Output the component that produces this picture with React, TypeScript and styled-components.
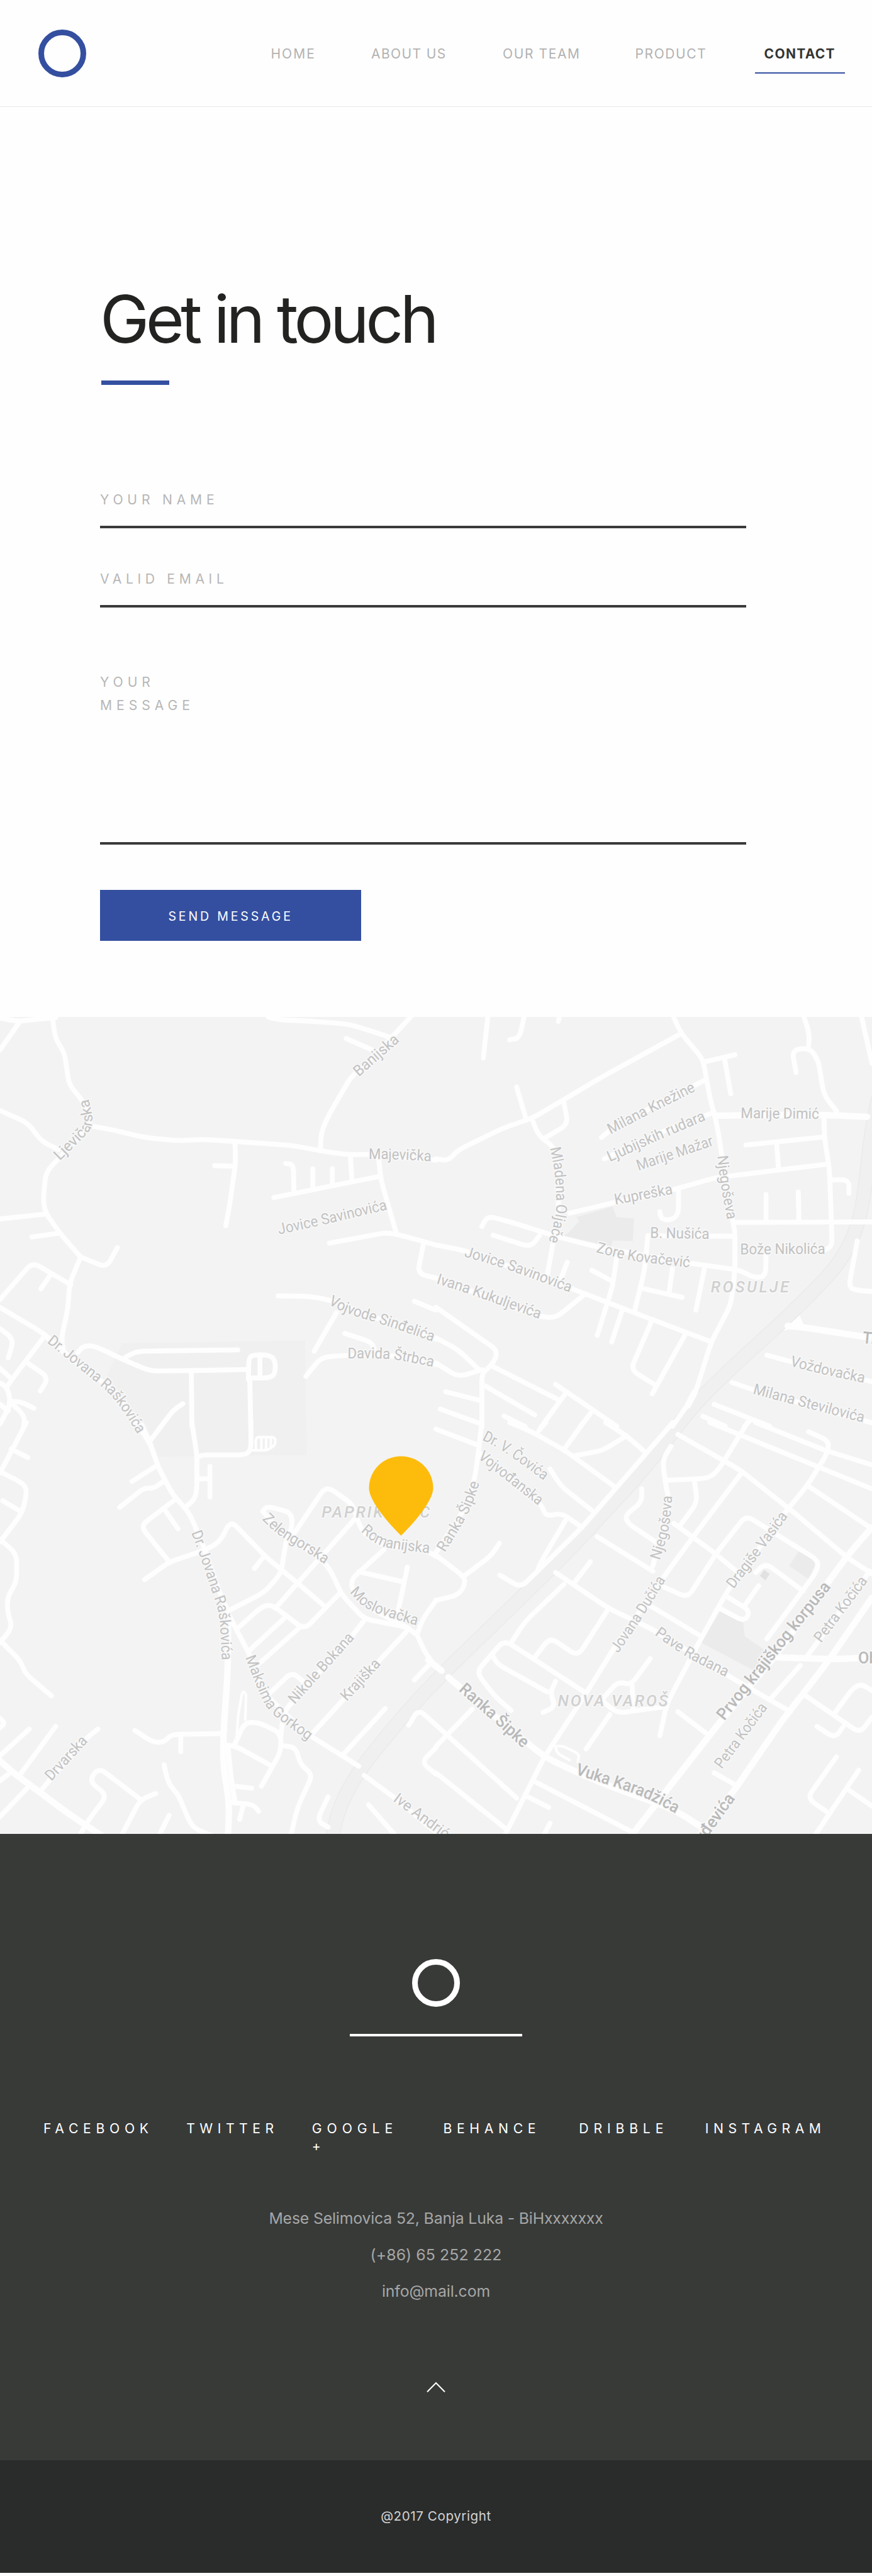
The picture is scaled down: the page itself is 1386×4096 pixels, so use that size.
import React from "react";
import styled, { createGlobalStyle } from "styled-components";

const colors = {
  blue: "#344fa0",
  ink: "#232321",
  rule: "#393a39",
  muted: "#b2b2b2",
  paper: "#fefefe",
  footer: "#383a38",
  footerDark: "#2a2c2b",
  pin: "#fdbc0b",
};

const GlobalStyle = createGlobalStyle`
  *, *::before, *::after { box-sizing: border-box; }
  body {
    margin: 0;
    background: ${colors.paper};
    font-family: Inter, "Liberation Sans", sans-serif;
    -webkit-font-smoothing: antialiased;
  }
`;

/* ---------- shared ---------- */

const Page = styled.div`
  width: 1386px;
  height: 4096px;
  overflow: hidden;
  display: flex;
  flex-direction: column;
  background: ${colors.paper};
`;

const Ring = styled.div<{ $color: string }>`
  width: 76px;
  height: 76px;
  border: 9px solid ${(p) => p.$color};
  border-radius: 50%;
`;

const Tracked = styled.span<{ $tracking: number }>`
  letter-spacing: ${(p) => p.$tracking}px;
  white-space: nowrap;
`;

/* ---------- header ---------- */

const Header = styled.header`
  height: 170px;
  flex: none;
  display: flex;
  align-items: flex-start;
  border-bottom: 1px solid #e9e9e9;
`;

const LogoLink = styled.a`
  display: block;
  margin: 47px 293.5px 0 61px;
`;

const Nav = styled.nav`
  display: grid;
  grid-template-columns: 159.5px 209px 210.5px 190.8px 142.4px;
  padding-top: 68px;
`;

const NavLink = styled.a<{ $active?: boolean }>`
  height: 49px;
  font-size: 21px;
  line-height: 36px;
  color: ${(p) => (p.$active ? "#333533" : colors.muted)};
  font-weight: ${(p) => (p.$active ? 700 : 400)};
  padding-left: ${(p) => (p.$active ? "14.3px" : "0")};
  border-bottom: 2px solid ${(p) => (p.$active ? colors.blue : "transparent")};
`;

const navItems = [
  { label: "HOME", tracking: 2 },
  { label: "ABOUT US", tracking: 1.4 },
  { label: "OUR TEAM", tracking: 1.6 },
  { label: "PRODUCT", tracking: 1.6 },
  { label: "CONTACT", tracking: 1.3, active: true },
];

/* ---------- contact form ---------- */

const Contact = styled.main`
  height: 1447px;
  flex: none;
  padding: 277px 0 0 159px;
`;

const Title = styled.h1`
  margin: 0;
  font-size: 105px;
  line-height: 120px;
  font-weight: 400;
  letter-spacing: -5.65px;
  color: ${colors.ink};
`;

const TitleBar = styled.div`
  width: 108px;
  height: 7px;
  margin: 38px 0 162px 2px;
  background: ${colors.blue};
`;

const Field = styled.label<{ $height: number; $gap: number; $line: number }>`
  display: flex;
  flex-direction: column;
  justify-content: space-between;
  width: 1027px;
  height: ${(p) => p.$height}px;
  margin-bottom: ${(p) => p.$gap}px;
  font-size: 21.2px;
  line-height: ${(p) => p.$line}px;
  color: #b7b7b7;

  &::after {
    content: "";
    height: 3.6px;
    background: ${colors.rule};
  }
`;

const Lines = styled.span`
  display: flex;
  flex-direction: column;
`;

const SubmitButton = styled.button`
  display: flex;
  align-items: center;
  width: 415px;
  height: 81px;
  padding: 2px 0 0 108.5px;
  border: 0;
  background: ${colors.blue};
  color: #fff;
  font: 400 19.6px Inter, sans-serif;
`;

/* ---------- map ---------- */

const MapFrame = styled.section`
  height: 1299.4px;
  flex: none;
  background: #f3f3f3;

  svg {
    display: block;
    width: 1386px;
    height: 1299.4px;
  }
`;

const Road = styled.path<{ $width: number }>`
  fill: none;
  stroke: #fefefe;
  stroke-width: ${(p) => p.$width};
  stroke-linecap: round;
  stroke-linejoin: round;
`;

const Rail = styled.path<{ $width: number; $color: string }>`
  fill: none;
  stroke: ${(p) => p.$color};
  stroke-width: ${(p) => p.$width};
`;

const Street = styled.text<{ $kind: Kind }>`
  font-family: Roboto, sans-serif;
  font-size: ${(p) => ({ street: 40, avenue: 44, district: 42 })[p.$kind]}px;
  font-weight: ${(p) => (p.$kind === "street" ? 400 : 500)};
  font-style: ${(p) => (p.$kind === "district" ? "italic" : "normal")};
  fill: ${(p) => ({ street: "#c2c2c2", avenue: "#b9b9b9", district: "#d0d0d0" })[p.$kind]};
  stroke: #f8f8f8;
  stroke-width: 6px;
  stroke-linejoin: round;
  paint-order: stroke;
`;

type Kind = "street" | "avenue" | "district";
type Point = [number, number];
type Tile = { x: number; y: number };

const TILE_SX = 1152 / 1568;
const TILE_SY = 1100 / 1568;
const NW: Tile = { x: 0, y: 2670 };
const NE: Tile = { x: 1152, y: 2670 };
const SW: Tile = { x: 0, y: 3760 };
const SE: Tile = { x: 1152, y: 3760 };

const project = (tile: Tile, line: string): Point[] =>
  line.split(" ").map((pair) => {
    const [x, y] = pair.split(",").map(Number);
    return [tile.x + x * TILE_SX, tile.y + y * TILE_SY];
  });

const distance = (a: Point, b: Point) => Math.hypot(b[0] - a[0], b[1] - a[1]);
const toward = (a: Point, b: Point, d: number): Point => {
  const t = d / (distance(a, b) || 1);
  return [a[0] + (b[0] - a[0]) * t, a[1] + (b[1] - a[1]) * t];
};
const fmt = (p: Point) => `${p[0].toFixed(1)} ${p[1].toFixed(1)}`;

/* Polyline with its corners eased by a quadratic curve. */
const soften = (pts: Point[], radius: number) => {
  let d = `M${fmt(pts[0])}`;
  for (let i = 1; i < pts.length - 1; i++) {
    const before = Math.min(radius, distance(pts[i], pts[i - 1]) / 2);
    const after = Math.min(radius, distance(pts[i], pts[i + 1]) / 2);
    d += `L${fmt(toward(pts[i], pts[i - 1], before))}Q${fmt(pts[i])} ${fmt(toward(pts[i], pts[i + 1], after))}`;
  }
  return `${d}L${fmt(pts[pts.length - 1])}`;
};

const streets: [Tile, string[]][] = [
  [NW, [
    "0,30 60,42 100,38 200,28", "0,150 70,45",
    "187,20 200,110 232,160 248,280 300,345 325,435",
    "0,378 100,425 150,495 210,525",
    "330,437 400,450 520,480 640,492 730,487 850,495 1050,510 1155,530 1250,545 1330,543 1568,565",
    "325,435 210,560 165,610 155,720 165,765 215,840 290,930",
    "0,787 165,768", "115,855 215,840", "290,930 383,970 422,895",
    "290,930 250,1030 245,1120 220,1240 230,1290",
    "0,1090 117,950 255,1035", "183,995 147,1050", "0,1120 160,1220 230,1290",
    "0,1200 50,1240 30,1310", "155,1235 40,1395 25,1420", "100,1330 175,1385 145,1435",
    "0,1350 40,1388", "0,1405 25,1420 40,1480 0,1560", "40,1475 75,1475 122,1500",
    "45,1485 90,1530 85,1568", "30,1510 0,1485",
    "160,1225 300,1350 420,1440 490,1554 540,1634",
    "280,1290 300,1265 340,1265 440,1315 540,1360 700,1358 890,1354",
    "445,1312 490,1285 855,1280",
    "893,1390 895,1310 910,1299 970,1299 990,1320 990,1370 970,1386 895,1386", "935,1299 935,1385",
    "688,1360 690,1568", "898,1390 902,1568", "535,1629 625,1505 658,1483",
    "845,500 848,570 825,740 812,812", "772,586 840,588",
    "985,706 1366,626", "1028,578 1055,580 1057,690", "1125,598 1125,668", "1195,598 1195,655",
    "1260,545 1266,645", "1362,560 1370,640 1425,840",
    "1185,878 1390,838 1440,848 1568,885", "1522,885 1502,992 1568,1010",
    "1000,1077 1110,1078 1190,1093 1300,1140 1568,1240", "1210,1140 1130,1285",
    "1240,1218 1335,1250 1345,1275", "1100,1380 1155,1308 1250,1300 1400,1300 1568,1335",
    "1490,1097 1568,1130",
    "965,26 1000,36 1120,42 1250,52 1340,80 1410,105", "1245,107 1350,155",
    "1490,10 1420,90 1350,170 1260,255 1180,400 1155,460 1152,530",
  ]],
  [NE, [
    "187,20 170,180", "318,20 300,105 265,112", "445,20 440,42",
    "0,560 45,568 75,530 240,445 350,405 600,250 875,92",
    "850,15 880,85 960,185 985,330 1010,430 1030,560 1060,760 1075,830 1075,985 1060,1110 990,1250 930,1450 850,1568",
    "965,195 1075,168", "1037,180 1060,315", "595,480 640,440 970,262", "605,560 820,455 1000,385",
    "290,290 325,415", "345,410 370,475 425,515 440,600 440,780 420,880 400,1000",
    "460,350 475,430 395,480", "480,765 640,725 860,675 1000,632 1410,580",
    "872,680 872,770 845,792 810,788 805,760",
    "1115,508 1395,478", "1225,500 1232,600", "1395,400 1397,480 1415,600 1425,890 1395,905",
    "1320,15 1343,90 1340,135", "1295,235 1280,150 1345,142 1375,190 1395,320 1440,380", "1528,15 1568,200",
    "1425,640 1485,638 1485,690", "1075,800 1568,798", "1187,695 1187,795", "1303,685 1305,795",
    "762,850 1075,852", "762,850 750,980 715,1130",
    "165,815 185,775 290,805 440,855 590,895 920,955 1095,980 1140,1008 1185,1005 1187,920",
    "205,848 340,893 372,850", "0,885 100,905 490,1050 700,1135 990,1250",
    "0,1010 375,1155 430,1160 530,1075", "472,950 450,1010", "560,980 635,1022",
    "650,930 635,1040 580,1225", "670,1130 632,1250", "740,1048 885,1082", "850,975 838,1065",
    "965,975 935,1130", "778,1165 700,1355 785,1410", "900,1215 778,1445",
    "1515,870 1485,1040 1505,1055 1568,1060",
    "1190,1300 1280,1325 1568,1400", "1065,1403 1140,1430 1568,1555", "1000,1485 1200,1568",
    "960,1530 1040,1568", "1130,1545 1110,1568",
    "0,1120 225,1285 200,1340 165,1365 165,1568", "0,1235 80,1280 150,1350", "0,1330 80,1382 165,1355",
    "200,1340 435,1465", "430,1410 650,1568", "465,1445 375,1575", "555,1520 520,1568",
    "175,1415 355,1525", "35,1438 165,1472", "15,1503 165,1560", "245,1530 320,1568",
  ]],
  [SW, [
    "95,0 0,190", "40,100 100,132", "0,185 85,230 97,260 80,340 0,450", "10,295 75,335",
    "0,440 60,495 60,600 25,660 28,720 45,770 0,830", "0,820 75,900 90,945 185,1030",
    "0,1115 18,1133 0,1150", "0,1255 105,1155", "70,1330 200,1145", "145,1390 200,1320 310,1190 352,1155",
    "0,1350 30,1325", "0,1485 100,1375", "285,1560 310,1510 385,1405 320,1350 355,1300 505,1420",
    "435,1560 505,1420 560,1398", "570,1560 608,1480",
    "590,1290 605,1360 640,1400 680,1500 700,1530 760,1556",
    "485,1160 550,1205 590,1205 615,1175 800,1172", "650,1175 650,1240",
    "510,10 540,80 570,170 620,270 680,340 730,460 790,640 830,740 900,880 960,1030 1100,1170 1230,1255 1290,1295",
    "690,0 708,120 708,250 700,290 665,320", "710,132 725,122 885,122 903,100 902,0",
    "710,212 755,212", "755,165 755,280",
    "475,222 560,165", "430,320 520,245 550,250 590,220", "630,290 505,390 605,520", "590,325 640,400",
    "520,592 610,525 740,480 790,450 830,370 960,510 1070,605 1165,690", "915,550 945,510",
    "945,335 960,315 1050,340 1050,400 1030,440 1010,570 950,640 820,710",
    "945,335 1000,400 1160,520 1190,560 1230,650 1310,740 1460,770 1500,800",
    "1500,800 1520,740 1568,670", "1500,800 1530,870 1568,920",
    "1050,430 1165,250 1190,250 1270,310 1285,370 1310,420 1380,465 1530,480 1568,505",
    "1275,365 1160,500 1070,605 990,700",
    "1380,480 1290,565 1265,590 1265,630 1330,700 1470,775", "1290,562 1450,600", "1465,545 1430,720",
    "855,775 940,695 975,685 1095,780 1225,640", "895,860 1020,740", "930,910 1080,770",
    "960,1030 1050,940 1090,975", "1310,745 1270,800 1020,1090 1010,1180", "1460,790 1370,890 1120,1175",
    "1235,1250 1385,1078",
    "805,1215 845,1218 970,1290", "845,1210 880,1130 930,1130 1010,1170 1010,1240 940,1370",
    "820,1220 830,1330 845,1430", "845,1370 905,1378", "825,1432 910,1438 930,1465", "875,1440 862,1495",
    "1020,1218 1065,1225 1080,1290 1125,1325 1070,1450 1045,1560",
    "1180,1410 1140,1500 1180,1525", "1310,1330 1420,1415 1568,1545", "1325,1440 1425,1560",
    "1490,970 1550,905", "1470,1140 1505,1080 1568,1140", "1568,1225 1515,1280 1568,1325",
  ]],
  [SE, [
    "0,25 150,85", "165,0 155,90 140,210 100,330 0,490", "0,500 100,580 105,610 80,650 0,670",
    "105,575 200,500 228,455", "265,0 345,35 470,110 640,240", "370,30 395,0", "465,95 530,0",
    "610,0 685,50 750,110", "500,125 600,105 685,50",
    "852,0 525,395 365,560 305,622 230,575", "365,560 375,530 465,370", "410,175 450,240 565,335",
    "525,395 450,340 395,355 380,310 165,120",
    "740,250 740,300 680,350 690,380 790,450", "580,430 780,560",
    "430,565 620,700 690,735 780,780 1060,960 1275,1090", "500,600 555,525",
    "460,610 320,750 270,830", "540,1020 350,890 245,820 145,940 210,1030 270,1085",
    "355,885 410,810 510,880 615,710", "205,880 220,910 400,1015", "430,975 410,1020 430,1070 385,1092",
    "845,90 815,140 825,230 840,300 780,540", "870,45 1095,180 1300,350 1480,510 1568,570",
    "825,218 980,210 1015,180 1120,0", "930,225 940,300 880,385", "855,380 1000,490 1080,560",
    "1095,195 925,430 820,580 640,850 540,1020 390,1260 245,1560",
    "1010,490 1115,350 1375,520 1370,560 1190,815", "1010,490 905,660 820,620", "770,690 945,800",
    "985,0 1568,250", "1150,0 1400,105 1568,160",
    "1340,35 1415,70 1405,120 1340,230 1255,340 1045,640 950,820 830,1060 805,1180",
    "1150,565 1185,530 1320,635", "1160,615 1110,690", "1045,655 1130,710 1110,750 1020,700",
    "1340,240 1560,395", "1335,880 1560,560", "1200,1045 1310,915",
    "870,1090 970,1170", "1330,1030 1525,1170 1568,1110", "1430,1100 1500,1000 1530,985 1568,1010",
    "1370,1145 1435,1190 1465,1145", "1000,1320 1085,1370", "1440,1260 1335,1415 1410,1470",
    "1520,1310 1360,1560", "1485,1385 1568,1445",
    "0,1140 290,1415", "0,1220 130,1080", "0,1320 250,1530", "350,1350 700,1540", "320,1405 405,1450",
    "385,1560 410,1510", "600,1040 655,975 700,990 770,890", "705,990 710,1080",
    "600,1050 650,1095 830,1070", "625,1100 540,1230",
  ]],
];

const avenues: [Tile, string][] = [
  [NE, "1005,398 1200,395 1400,395 1550,402"],
  [NE, "1265,1190 1320,1195 1568,1235"],
  [NE, "930,1440 905,1490"],
  [SW, "0,1275 60,1330 140,1390 240,1470 370,1560"],
  [SW, "820,720 820,900 815,1000 803,1180 803,1300 825,1430 820,1560"],
  [SW, "1540,895 1588,935"],
  [SE, "1568,395 1480,500 1220,880 1020,1130 700,1560"],
  [SE, "1568,660 1410,900 1240,1130 1070,1390 945,1560"],
  [SE, "1230,885 1430,892 1568,885"],
  [SE, "45,960 100,1010 390,1260 480,1305 600,1360 860,1460 970,1535"],
];

const alleys: [Tile, string][] = [
  [SW, "850,1200 857,1100 872,1012 885,1020 882,1120"],
  [SW, "903,105 960,105 990,85 990,55 920,55 920,100"],
  [SW, "940,55 940,98"],
  [SW, "957,55 957,98"],
  [SW, "974,55 974,94"],
  [SE, "430,1220 455,1218 515,1250 510,1280"],
  [SE, "430,1220 435,1245 480,1272"],
];

const areas: [Tile, string, string][] = [
  [NW, "440,1255 1097,1245 1103,1676 570,1682 530,1568 420,1430 385,1375", "#f0f0f0"],
  [NE, "460,850 480,835 515,795 505,780 635,740 650,780 712,785 708,870 635,868 630,890", "#ebebeb"],
  [SE, "1025,705 1105,755 1110,805 1185,860 1145,935 955,830", "#ebebeb"],
  [SE, "1305,485 1370,520 1340,590 1270,540", "#ebebeb"],
  [SE, "1180,555 1200,570 1185,595 1165,578", "#e1e1e1"],
  [NE, "1228,1212 1302,1138 1325,1190", "#fefefe"],
];

const railway = soften(
  [
    ...project(NE, "1590,330 1562,480 1545,660 1520,810 1460,940 1380,1035 1270,1150 1050,1360 925,1490"),
    ...project(SE, "745,180 485,475 350,615 20,950"),
    ...project(SW, "1450,1105 1295,1305 1222,1440 1193,1570"),
  ],
  60,
);

const labels: [Tile, string, string, Kind?][] = [
  [NW, "Ljevičarska", "215,568 325,455 333,425 332,390 318,332"],
  [NW, "Banijska", "1290,252 1440,115"],
  [NW, "Majevička", "1326,562 1440,562 1553,570"],
  [NW, "Jovice Savinovića", "1003,845 1150,812 1398,750"],
  [NW, "Vojvode Sinđelića", "1180,1108 1250,1145 1380,1185 1560,1250"],
  [NW, "Davida Štrbca", "1250,1312 1390,1312 1470,1325 1560,1345"],
  [NW, "Dr. Jovana Raškovića", "168,1252 240,1312 350,1405 400,1450 450,1520 497,1602"],
  [NE, "Mladena Oljače", "410,520 428,610 433,720 432,770 405,875"],
  [NE, "Milana Knežine", "628,468 780,385 938,302"],
  [NE, "Ljubijskih rudara", "625,572 800,490 975,412"],
  [NE, "Marije Mažar", "728,605 870,555 1003,508"],
  [NE, "Kupreška", "645,733 855,692"],
  [NE, "Njegoševa", "1012,550 1025,670 1048,793"],
  [NE, "Marije Dimić", "1096,407 1380,410"],
  [NE, "B. Nušića", "770,858 985,862"],
  [NE, "Zore Kovačević", "575,912 700,945 915,970"],
  [NE, "Bože Nikolića", "1094,920 1403,918"],
  [NE, "ROSULJE", "988,1063 1272,1063", "district"],
  [NE, "Jovice Savinovića", "100,928 240,970 485,1065"],
  [NE, "Ivana Kukuljevića", "0,1030 100,1062 375,1165"],
  [NE, "Tr", "1533,1255 1583,1260", "avenue"],
  [NE, "Voždovačka", "1272,1340 1400,1375 1542,1405"],
  [NE, "Milana Stevilovića", "1138,1445 1300,1490 1540,1555"],
  [SW, "Zelengorska", "942,365 1000,425 1100,485 1170,535"],
  [SW, "PAPRIKOVAC", "1157,358 1550,358", "district"],
  [SW, "Romanijska", "1297,410 1360,465 1440,480 1545,492"],
  [SW, "Moslovačka", "1257,640 1310,700 1400,735 1500,765"],
  [SW, "Nikole Bokana", "1060,1063 1278,810"],
  [SW, "Krajiška", "1247,1052 1372,910"],
  [SW, "Dr. Jovana Raškovića", "688,415 715,490 760,630 790,720 798,900"],
  [SW, "Maksima Gorkog", "882,885 925,1000 960,1080 1010,1125 1110,1200"],
  [SW, "Drvarska", "185,1352 318,1200"],
  [SW, "Ive Andrića", "1412,1425 1625,1590"],
  [SE, "Dr. V. Čovića", "165,65 240,105 390,220"],
  [SE, "Vojvođanska", "150,135 250,215 370,315"],
  [SE, "Ranka Šipke", "32,490 100,375 135,300 157,225"],
  [SE, "Njegoševa", "805,520 840,400 850,275"],
  [SE, "Jovana Dučića", "655,870 740,740 828,590"],
  [SE, "Dragiše Vasića", "1070,628 1150,520 1268,350"],
  [SE, "Pave Radana", "785,800 900,885 1045,960"],
  [SE, "NOVA VAROŠ", "438,1068 838,1068", "district"],
  [SE, "Ranka Šipke", "80,1010 200,1120 315,1230", "avenue"],
  [SE, "Vuka Karadžića", "500,1325 620,1365 760,1415 865,1475", "avenue"],
  [SE, "Prvog krajiškog korpusa", "1037,1125 1425,615", "avenue"],
  [SE, "Petra Kočića", "1385,832 1555,595"],
  [SE, "Petra Kočića", "1028,1307 1195,1072"],
  [SE, "rđevića", "965,1580 1078,1415", "avenue"],
  [SE, "Ob", "1518,908 1590,908", "avenue"],
];

function StreetLabel({ id, tile, text, line, kind }: { id: string; tile: Tile; text: string; line: string; kind: Kind }) {
  const pts = project(tile, line);
  const length = pts.slice(1).reduce((sum, p, i) => sum + distance(pts[i], p), 0);
  const last = pts[pts.length - 1];
  const prev = pts[pts.length - 2];
  const extended = [...pts.slice(0, -1), toward(prev, last, distance(prev, last) + 40)];
  return (
    <>
      <path id={id} d={soften(extended, 50)} fill="none" />
      <Street $kind={kind}>
        <textPath
          href={`#${id}`}
          textLength={length * 0.99}
          lengthAdjust={kind === "district" ? "spacing" : "spacingAndGlyphs"}
        >
          {text}
        </textPath>
      </Street>
    </>
  );
}

function CityMap() {
  return (
    <MapFrame>
      <svg viewBox="0 2688 2304 2160" preserveAspectRatio="none">
        {areas.map(([tile, line, fill]) => (
          <polygon key={line} points={project(tile, line).map((p) => p.join(",")).join(" ")} fill={fill} />
        ))}
        <Rail d={railway} $width={38} $color="#e9e9e9" />
        <Rail d={railway} $width={34} $color="#f0f0f0" />
        {alleys.map(([tile, line]) => (
          <Road key={line} d={soften(project(tile, line), 10)} $width={7} />
        ))}
        {streets.map(([tile, lines]) =>
          lines.map((line) => <Road key={line} d={soften(project(tile, line), 22)} $width={13} />),
        )}
        {avenues.map(([tile, line]) => (
          <Road key={line} d={soften(project(tile, line), 40)} $width={17} />
        ))}
        {labels.map(([tile, text, line, kind = "street"], i) => (
          <StreetLabel key={line} id={`street-${i}`} tile={tile} text={text} line={line} kind={kind} />
        ))}
        <path
          d="M1059.8 4059C1030 4030 975 3968 975 3933.5A84.8 84.5 0 0 1 1144.6 3933.5C1144.6 3968 1089.6 4030 1059.8 4059Z"
          fill={colors.pin}
        />
      </svg>
    </MapFrame>
  );
}

/* ---------- footer ---------- */

const Footer = styled.footer`
  height: 996px;
  flex: none;
  display: flex;
  flex-direction: column;
  align-items: center;
  padding-top: 198.4px;
  background: ${colors.footer};
`;

const FooterRule = styled.div`
  width: 274px;
  height: 3.6px;
  margin-top: 43.3px;
  background: #fff;
`;

const SocialLinks = styled.nav`
  align-self: stretch;
  display: grid;
  grid-template-columns: 227.2px 199.6px 208.7px 215.8px 200.5px 1fr;
  margin-top: 132px;
  padding-left: 69px;
`;

const SocialLink = styled.a`
  display: flex;
  flex-direction: column;
  font-size: 21.2px;
  line-height: 28.4px;
  color: #fff;
`;

const Address = styled.address`
  margin-top: 73px;
  display: flex;
  flex-direction: column;
  align-items: center;
  font-style: normal;
  font-size: 24.8px;
  line-height: 57.8px;
  color: #a6a7a6;
`;

const BackToTop = styled.svg`
  display: block;
  width: 30px;
  height: 18px;
  margin-top: 114px;
  fill: none;
  stroke: #fff;
  stroke-width: 2;
`;

const Copyright = styled.div`
  height: 178.5px;
  flex: none;
  display: flex;
  align-items: center;
  justify-content: center;
  padding-bottom: 2px;
  background: ${colors.footerDark};
  color: #d3d3d3;
  font-size: 20.6px;
`;

const socialItems = [
  { lines: ["FACEBOOK"], tracking: 7.7 },
  { lines: ["TWITTER"], tracking: 7.5 },
  { lines: ["GOOGLE", "+"], tracking: 7.95 },
  { lines: ["BEHANCE"], tracking: 7.65 },
  { lines: ["DRIBBLE"], tracking: 7.85 },
  { lines: ["INSTAGRAM"], tracking: 7.5 },
];

export default function App() {
  return (
    <Page>
      <GlobalStyle />
      <Header>
        <LogoLink>
          <Ring $color={colors.blue} />
        </LogoLink>
        <Nav>
          {navItems.map((item) => (
            <NavLink key={item.label} $active={item.active}>
              <Tracked $tracking={item.tracking}>{item.label}</Tracked>
            </NavLink>
          ))}
        </Nav>
      </Header>

      <Contact>
        <Title>Get in touch</Title>
        <TitleBar />
        <Field $height={65.5} $gap={60.9} $line={40}>
          <Tracked $tracking={6.75}>YOUR NAME</Tracked>
        </Field>
        <Field $height={65.5} $gap={100.6} $line={40}>
          <Tracked $tracking={6.6}>VALID EMAIL</Tracked>
        </Field>
        <Field $height={276.5} $gap={72.3} $line={36.1}>
          <Lines>
            <Tracked $tracking={6.9}>YOUR</Tracked>
            <Tracked $tracking={6.9}>MESSAGE</Tracked>
          </Lines>
        </Field>
        <SubmitButton>
          <Tracked $tracking={3.8}>SEND MESSAGE</Tracked>
        </SubmitButton>
      </Contact>

      <CityMap />

      <Footer>
        <Ring $color="#fff" />
        <FooterRule />
        <SocialLinks>
          {socialItems.map((item) => (
            <SocialLink key={item.lines[0]}>
              {item.lines.map((line) => (
                <Tracked key={line} $tracking={item.tracking}>
                  {line}
                </Tracked>
              ))}
            </SocialLink>
          ))}
        </SocialLinks>
        <Address>
          <Tracked $tracking={-0.16}>Mese Selimovica 52, Banja Luka - BiHxxxxxxx</Tracked>
          <Tracked $tracking={0.1}>(+86) 65 252 222</Tracked>
          <Tracked $tracking={-0.1}>info@mail.com</Tracked>
        </Address>
        <BackToTop viewBox="0 0 30 18">
          <path d="M1 16.2L15 2L29 16.2" />
        </BackToTop>
      </Footer>

      <Copyright>
        <Tracked $tracking={0.58}>@2017 Copyright</Tracked>
      </Copyright>
    </Page>
  );
}
